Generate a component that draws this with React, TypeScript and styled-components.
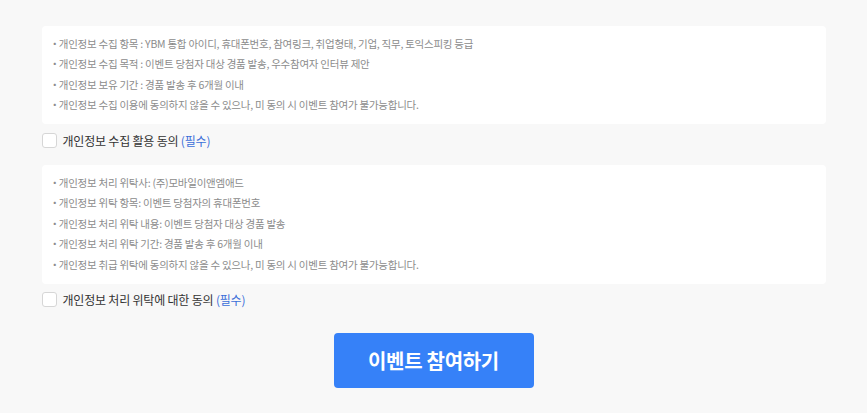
import styled, { createGlobalStyle } from "styled-components";

const GlobalStyle = createGlobalStyle`
  html, body {
    margin: 0;
    padding: 0;
    background: #f8f8f8;
  }
  body {
    font-family: "Noto Sans CJK KR", "Noto Sans", sans-serif;
  }
`;

const Wrapper = styled.div`
  width: 784px;
  margin: 0 auto;
  padding-top: 26px;
  display: flex;
  flex-direction: column;
`;

const InfoBox = styled.ul`
  list-style: none;
  margin: 0;
  padding: 7.5px 8px 8.5px;
  background: #fff;
  border-radius: 4px;
`;

const InfoItem = styled.li`
  font-size: 10.5px;
  line-height: 20.5px;
  color: #8c8c8c;
  letter-spacing: -0.25px;
  white-space: nowrap;
  &::before {
    content: "・";
    margin-right: -1px;
  }
`;

const AgreeRow = styled.label<{ gapBelow: number }>`
  display: flex;
  align-items: center;
  gap: 6px;
  height: 16px;
  margin: 8px 0 ${(p) => p.gapBelow}px;
  font-size: 12px;
  letter-spacing: -0.2px;
  color: #333;
  cursor: pointer;
`;

const Check = styled.span`
  width: 13px;
  height: 13px;
  border: 1px solid #d6d6d6;
  border-radius: 3px;
  background: #fff;
  flex-shrink: 0;
`;

const Required = styled.span`
  color: #3b6fd8;
`;

const SubmitButton = styled.button`
  align-self: center;
  width: 200px;
  height: 55px;
  border: none;
  border-radius: 4px;
  background: #3681f8;
  color: #fff;
  font-family: inherit;
  font-size: 20px;
  font-weight: 700;
  letter-spacing: -0.3px;
  cursor: pointer;
`;

const collectItems = [
  "개인정보 수집 항목 : YBM 통합 아이디, 휴대폰번호, 참여링크, 취업형태, 기업, 직무, 토익스피킹 등급",
  "개인정보 수집 목적 : 이벤트 당첨자 대상 경품 발송, 우수참여자 인터뷰 제안",
  "개인정보 보유 기간 : 경품 발송 후 6개월 이내",
  "개인정보 수집 이용에 동의하지 않을 수 있으나, 미 동의 시 이벤트 참여가 불가능합니다.",
];

const consignItems = [
  "개인정보 처리 위탁사: (주)모바일이앤엠애드",
  "개인정보 위탁 항목: 이벤트 당첨자의 휴대폰번호",
  "개인정보 처리 위탁 내용: 이벤트 당첨자 대상 경품 발송",
  "개인정보 처리 위탁 기간: 경품 발송 후 6개월 이내",
  "개인정보 취급 위탁에 동의하지 않을 수 있으나, 미 동의 시 이벤트 참여가 불가능합니다.",
];

export default function App() {
  return (
    <>
      <GlobalStyle />
      <Wrapper>
        <InfoBox>
          {collectItems.map((t) => (
            <InfoItem key={t}>{t}</InfoItem>
          ))}
        </InfoBox>
        <AgreeRow gapBelow={17}>
          <Check />
          <span>
            개인정보 수집 활용 동의 <Required>(필수)</Required>
          </span>
        </AgreeRow>
        <InfoBox>
          {consignItems.map((t) => (
            <InfoItem key={t}>{t}</InfoItem>
          ))}
        </InfoBox>
        <AgreeRow gapBelow={25}>
          <Check />
          <span>
            개인정보 처리 위탁에 대한 동의 <Required>(필수)</Required>
          </span>
        </AgreeRow>
        <SubmitButton>이벤트 참여하기</SubmitButton>
      </Wrapper>
    </>
  );
}
